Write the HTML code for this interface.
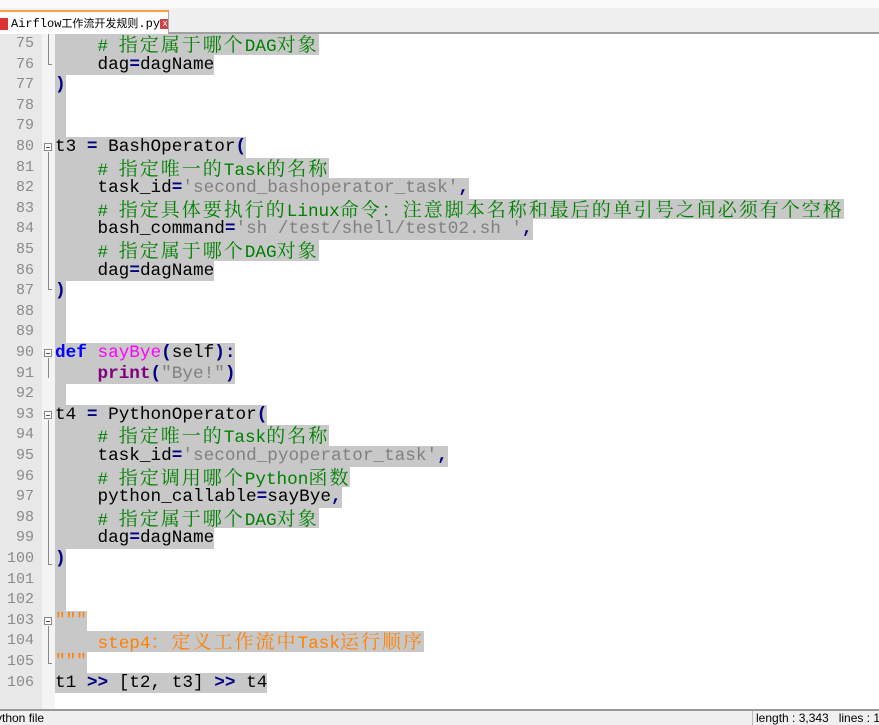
<!DOCTYPE html>
<html><head><meta charset="utf-8"><style>
body{margin:0;width:879px;height:723px;overflow:hidden;background:#fff;position:relative;font-family:"Liberation Mono","Noto Sans CJK SC",monospace}
#tb{position:absolute;left:0;top:0;width:879px;height:8px;background:#fafafa}
#tabbar{position:absolute;left:0;top:8px;width:879px;height:24px;background:#f0f0f0;border-bottom:2px solid #a0a0a0}
#tab{position:absolute;left:0;top:10px;width:168px;height:23px;background:#fff;border-top:2px solid #f7a040;border-right:1px solid #aaa;font-size:12px;line-height:22px;color:#000;white-space:nowrap;overflow:hidden}
#gut{position:absolute;left:0;top:34px;width:42px;height:676px;background:#e8e8e8}
#fold{position:absolute;left:42px;top:34px;width:13px;height:676px;background:#f4f4f4}
.ln{position:absolute;left:0;width:34px;text-align:right;color:#8a8a8a;font-size:15px;height:20.6px;line-height:20.6px}
.l{position:absolute;left:55px;height:20.6px;line-height:20.6px;font-size:17.7px;white-space:pre;background:#c8c8c8;color:#000;overflow:hidden}
.c{color:#008000}.s{color:#808080}.o{color:#000080;font-weight:bold}.k{color:#0000ff;font-weight:bold}.f{color:#ff00ff}.p{color:#800080;font-weight:bold}.t{color:#ff8000}
.cj{font-size:19px;letter-spacing:2px;line-height:1;font-family:"Noto Serif CJK SC","Noto Sans CJK SC",serif}
.fb{position:absolute;left:44px;width:8px;height:8px;border:1px solid #888;background:#fff;box-sizing:border-box}
.fb:after{content:"";position:absolute;left:1px;top:3px;width:4px;height:1px;background:#555}
#status{position:absolute;left:0;top:709px;width:879px;height:14px;background:#f0f0f0;border-top:2px solid #999;font-family:"Liberation Sans",sans-serif;font-size:12px;line-height:14px;white-space:nowrap}
</style></head><body>
<div id="tb"></div>
<div id="tabbar"></div>
<div id="tab"><span style="display:inline-block;width:8px;height:12px;background:#d33;vertical-align:middle;margin-right:3px"></span>Airflow<span style="font-family:'Noto Sans CJK SC',sans-serif;font-size:11px">工作流开发规则</span>.py<span style="display:inline-block;width:10px;height:10px;background:#c44;color:#fff;font-size:9px;line-height:10px;text-align:center;vertical-align:middle">x</span></div>
<div id="gut"></div><div id="fold"></div>
<div style="position:absolute;left:48px;top:34px;width:1px;height:31px;background:#888"></div>
<div style="position:absolute;left:48px;top:64px;width:4px;height:1px;background:#888"></div>
<div style="position:absolute;left:48px;top:152px;width:1px;height:138px;background:#888"></div>
<div style="position:absolute;left:48px;top:289px;width:4px;height:1px;background:#888"></div>
<div style="position:absolute;left:48px;top:358px;width:1px;height:20px;background:#888"></div>
<div style="position:absolute;left:48px;top:420px;width:1px;height:145px;background:#888"></div>
<div style="position:absolute;left:48px;top:564px;width:4px;height:1px;background:#888"></div>
<div style="position:absolute;left:48px;top:626px;width:1px;height:38px;background:#888"></div>
<div style="position:absolute;left:48px;top:663px;width:4px;height:1px;background:#888"></div>
<div class="fb" style="top:143px"></div>
<div class="fb" style="top:349px"></div>
<div class="fb" style="top:411px"></div>
<div class="fb" style="top:617px"></div>
<div id="lines"></div>
<script>
const L=[
[75,'    <span class="c"># 指定属于哪个DAG对象</span>'],
[76,'    dag<span class="o">=</span>dagName'],
[77,'<span class="o">)</span>'],
[78,' '],[79,' '],
[80,'t3 <span class="o">=</span> BashOperator<span class="o">(</span>'],
[81,'    <span class="c"># 指定唯一的Task的名称</span>'],
[82,'    task_id<span class="o">=</span><span class="s">\'second_bashoperator_task\'</span><span class="o">,</span>'],
[83,'    <span class="c"># 指定具体要执行的Linux命令：注意脚本名称和最后的单引号之间必须有个空格</span>'],
[84,'    bash_command<span class="o">=</span><span class="s">\'sh /test/shell/test02.sh \'</span><span class="o">,</span>'],
[85,'    <span class="c"># 指定属于哪个DAG对象</span>'],
[86,'    dag<span class="o">=</span>dagName'],
[87,'<span class="o">)</span>'],
[88,' '],[89,' '],
[90,'<span class="k">def</span> <span class="f">sayBye</span><span class="o">(</span>self<span class="o">):</span>'],
[91,'    <span class="p">print</span><span class="o">(</span><span class="s">"Bye!"</span><span class="o">)</span>'],
[92,' '],
[93,'t4 <span class="o">=</span> PythonOperator<span class="o">(</span>'],
[94,'    <span class="c"># 指定唯一的Task的名称</span>'],
[95,'    task_id<span class="o">=</span><span class="s">\'second_pyoperator_task\'</span><span class="o">,</span>'],
[96,'    <span class="c"># 指定调用哪个Python函数</span>'],
[97,'    python_callable<span class="o">=</span>sayBye<span class="o">,</span>'],
[98,'    <span class="c"># 指定属于哪个DAG对象</span>'],
[99,'    dag<span class="o">=</span>dagName'],
[100,'<span class="o">)</span>'],
[101,' '],[102,' '],
[103,'<span class="t">"""</span>'],
[104,'    <span class="t">step4：定义工作流中Task运行顺序</span>'],
[105,'<span class="t">"""</span>'],
[106,'t1 <span class="o">&gt;&gt;</span> [t2, t3] <span class="o">&gt;&gt;</span> t4']
];
let h='';
L.forEach(([n,t])=>{const y=34+(n-75)*20.6;
t=t.replace(/([\u3000-\u9fff\uff00-\uffef]+)/g,'<span class="cj">$1</span>');
h+=`<div class="ln" style="top:${y}px">${n}</div><div class="l" style="top:${y}px">${t}</div>`;});
document.getElementById('lines').innerHTML=h;
</script>
<div id="status"><span style="position:absolute;left:-4px">ython file</span><span style="position:absolute;left:752px;border-left:1px solid #bbb;padding-left:3px">length : 3,343&nbsp;&nbsp;&nbsp;lines : 1</span></div>
</body></html>
